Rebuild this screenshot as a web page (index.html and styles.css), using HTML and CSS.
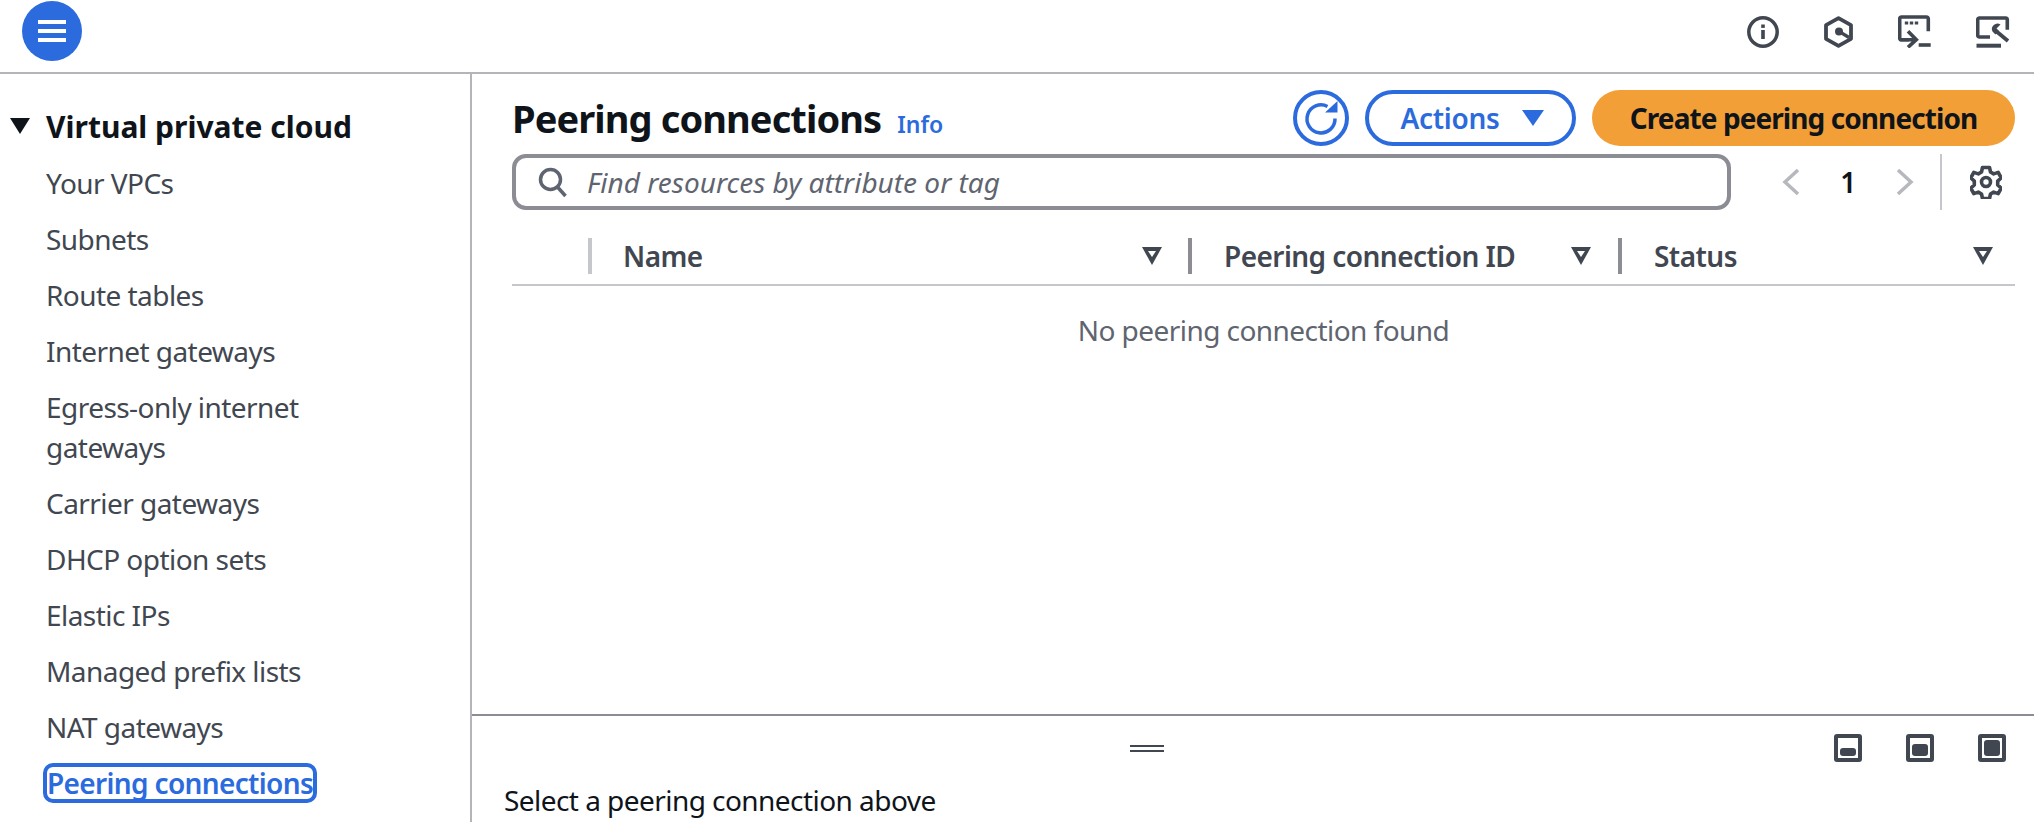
FILE: index.html
```html
<!DOCTYPE html>
<html lang="en">
<head>
<meta charset="utf-8">
<title>Peering connections</title>
<link rel="stylesheet" href="styles.css">
</head>
<body>
<header class="topbar">
  <button class="menu-btn" aria-label="Menu"><span></span><span></span><span></span></button>
  <div class="top-icons">
    <svg class="ti" width="32" height="32" viewBox="0 0 32 32" fill="none" stroke="#414750" stroke-width="3.500"><circle cx="16" cy="16" r="14.200"/><rect x="14.200" y="14" width="3.600" height="9" fill="#414750" stroke="none"/><rect x="14.200" y="8.500" width="3.600" height="3.400" fill="#414750" stroke="none"/></svg>
    <svg class="ti" width="29" height="32" viewBox="0 0 29 32" fill="none" stroke="#414750" stroke-width="3.800"><path d="M14.500 2.200 27 9.200v13.600L14.500 29.800 2 22.800V9.200z" stroke-linejoin="round"/><circle cx="15" cy="15.400" r="4" fill="#414750" stroke="none"/><path d="M15 15.400 25 21.500" stroke-width="3.400"/></svg>
    <svg class="ti" width="33" height="33" viewBox="0 0 33 33" fill="none" stroke="#414750" stroke-width="3.600"><path d="M11 24.700H3.500a1.800 1.800 0 0 1-1.800-1.800V3.800A1.800 1.800 0 0 1 3.500 2h25a1.800 1.800 0 0 1 1.800 1.800v12.500" stroke-linejoin="round"/><path d="M6.800 8h3.400M11.800 8h3.400M16.800 8h3.400" stroke-width="3"/><path d="M1.700 24.700H17M10 16.300l8.300 8.400L10 32.300"/><path d="M20.700 30h12"/></svg>
    <svg class="ti" width="34" height="32" viewBox="0 0 34 32" fill="none" stroke="#414750" stroke-width="3.600"><path d="M14 21H3.500a1.800 1.800 0 0 1-1.800-1.800V3.800A1.800 1.800 0 0 1 3.500 2h26a1.800 1.800 0 0 1 1.800 1.800v10"/><path d="M0.500 29.700h24.500" stroke-width="4"/><path d="M24.500 8.500 20.500 12.500 23 15 19.500 18.500 16.500 15.500a5.500 5.500 0 0 1 8-7z" fill="#414750" stroke="none"/><path d="M20 15l12 10" stroke-width="3.800"/></svg>
  </div>
</header>
<div class="body">
  <nav class="sidebar">
    <div class="nav-head"><span class="caret"></span><span>Virtual private cloud</span></div>
    <ul class="nav-list">
      <li>Your VPCs</li>
      <li>Subnets</li>
      <li>Route tables</li>
      <li>Internet gateways</li>
      <li>Egress-only internet<br>gateways</li>
      <li>Carrier gateways</li>
      <li>DHCP option sets</li>
      <li>Elastic IPs</li>
      <li>Managed prefix lists</li>
      <li>NAT gateways</li>
      <li class="active"><span>Peering connections</span></li>
    </ul>
  </nav>
  <main class="main">
    <section class="upper">
      <div class="title-row">
        <div class="title-left"><h1>Peering connections</h1><a class="info">Info</a></div>
        <div class="actions">
          <button class="refresh" aria-label="Refresh"><svg width="38" height="38" viewBox="0 0 38 38" fill="none" stroke="#2b6bdd" stroke-width="3.500"><path d="M25.500 7.500A14 14 0 1 0 33 19.500"/><path d="M23 13.500h12.500V2z" fill="#2b6bdd" stroke="none"/></svg></button>
          <button class="btn-actions">Actions<span class="tri"></span></button>
          <button class="btn-create">Create peering connection</button>
        </div>
      </div>
      <div class="filter-row">
        <div class="search">
          <svg width="32" height="32" viewBox="0 0 32 32" fill="none" stroke="#5f6570" stroke-width="3.500"><circle cx="13.500" cy="13.500" r="10"/><path d="M20.500 21l8 9"/></svg>
          <span>Find resources by attribute or tag</span>
        </div>
        <div class="pager">
          <svg width="18" height="28" viewBox="0 0 18 28" fill="none" stroke="#b6b8be" stroke-width="3.500"><path d="M16 2 3 14l13 12"/></svg>
          <span class="page">1</span>
          <svg width="18" height="28" viewBox="0 0 18 28" fill="none" stroke="#b6b8be" stroke-width="3.500"><path d="M2 2l13 12L2 26"/></svg>
        </div>
        <div class="gear-wrap">
          <svg width="32" height="34" viewBox="0 0 32 34" fill="none" stroke="#414750" stroke-width="3.600" stroke-linejoin="round"><path d="M12.500 2.500h7l1 4.500 3.200 1.900 4.500-1.500 3 5.500-3.500 3.200v3.800l3.500 3.200-3 5.500-4.500-1.500-3.200 1.900-1 4.500h-7l-1-4.500-3.200-1.900-4.500 1.500-3-5.500 3.500-3.200v-3.800l-3.500-3.200 3-5.500 4.500 1.500 3.200-1.900z"/><circle cx="16" cy="17" r="4.500"/></svg>
        </div>
      </div>
      <div class="thead">
        <div class="th th-check"></div>
        <div class="th th-name"><span>Name</span><i class="sort"></i></div>
        <div class="th th-id"><span>Peering connection ID</span><i class="sort"></i></div>
        <div class="th th-status"><span>Status</span><i class="sort"></i></div>
      </div>
      <p class="empty">No peering connection found</p>
    </section>
    <section class="lower">
      <div class="handle-row">
        <span class="handle"></span>
        <div class="pane-icons">
          <span class="pane p1"><b></b></span>
          <span class="pane p2"><b></b></span>
          <span class="pane p3"><b></b></span>
        </div>
      </div>
      <p class="select">Select a peering connection above</p>
    </section>
  </main>
</div>
</body>
</html>
```

FILE: styles.css
```css
* { box-sizing: border-box; }
html, body { margin: 0; height: 100%; overflow: hidden; background: #fff; }
body { font-family: "Noto Sans", "Open Sans", sans-serif; font-size: 28px; letter-spacing: -0.55px; color: #414750; display: flex; flex-direction: column; height: 822px; }
button { font-family: inherit; cursor: pointer; }
ul { list-style: none; margin: 0; padding: 0; }
p, h1 { margin: 0; }

.topbar { height: 74px; flex: none; border-bottom: 2px solid #b4b4bb; display: flex; justify-content: space-between; padding: 1px 24px 0 22px; }
.menu-btn { width: 60px; height: 60px; border-radius: 50%; border: 0; background: #2b6bdd; display: flex; flex-direction: column; align-items: center; justify-content: center; gap: 5px; padding: 0; }
.menu-btn span { width: 28px; height: 4px; background: #fff; }
.top-icons { display: flex; align-items: center; gap: 45px; height: 60px; padding-top: 1px; }
.ti { display: block; }

.body { flex: 1; display: flex; min-height: 0; }
.sidebar { width: 472px; flex: none; border-right: 2px solid #b4b4bb; padding: 31px 0 0 10px; overflow: hidden; }
.nav-head { display: flex; align-items: center; gap: 16px; font-size: 30px; font-weight: 700; letter-spacing: 0; color: #0f141a; height: 42px; }
.caret { width: 0; height: 0; border-left: 10px solid transparent; border-right: 10px solid transparent; border-top: 16px solid #0f141a; }
.nav-list { padding: 16px 0 0 36px; }
.nav-list li { line-height: 40px; margin-bottom: 16px; }
.nav-list .active { color: #2b6bdd; font-weight: 600; letter-spacing: -0.65px; margin-left: -3px; margin-top: 1px; }
.nav-list .active span { display: inline-block; border: 4px solid #2b6bdd; border-radius: 10px; line-height: 32px; }

.main { flex: 1; display: flex; flex-direction: column; min-width: 0; }
.upper { height: 640px; flex: none; padding: 16px 19px 0 40px; }
.title-row { display: flex; justify-content: space-between; height: 56px; }
.title-left { display: flex; align-items: baseline; gap: 16px; padding-top: 3px; }
h1 { font-size: 38px; font-weight: 700; letter-spacing: -0.9px; color: #0f141a; line-height: 50px; }
.info { color: #2b6bdd; font-size: 23px; font-weight: 600; letter-spacing: 0; }
.actions { display: flex; gap: 16px; }
.refresh { width: 56px; height: 56px; border-radius: 50%; border: 4px solid #2b6bdd; background: #fff; padding: 0; display: flex; align-items: center; justify-content: center; }
.btn-actions { width: 211px; height: 56px; border-radius: 28px; border: 4px solid #2b6bdd; background: #fff; color: #2b6bdd; font-size: 28px; font-weight: 600; letter-spacing: -0.3px; display: flex; align-items: center; justify-content: center; gap: 22px; padding: 0 0 0 3px; }
.tri { width: 0; height: 0; border-left: 11px solid transparent; border-right: 11px solid transparent; border-top: 16px solid #2b6bdd; }
.btn-create { width: 423px; height: 56px; border-radius: 28px; border: 0; background: #f29f38; color: #0f141a; font-size: 28px; font-weight: 700; letter-spacing: -0.92px; padding: 0; }

.filter-row { display: flex; align-items: center; height: 56px; margin-top: 8px; }
.search { width: 1219px; height: 56px; border: 4px solid #8c8c94; border-radius: 14px; display: flex; align-items: center; gap: 18px; padding-left: 21px; color: #5f6570; font-style: italic; letter-spacing: 0; }
.pager { display: flex; align-items: center; margin-left: 51px; gap: 39px; }
.page { font-weight: 600; color: #0f141a; width: 18px; text-align: center; }
.gear-wrap { margin-left: 26px; padding-left: 28px; border-left: 2px solid #c6c6cd; height: 56px; display: flex; align-items: center; }

.thead { display: flex; height: 76px; border-bottom: 2px solid #c6c6cd; padding-top: 28px; font-weight: 600; }
.th { height: 36px; display: flex; align-items: center; justify-content: space-between; }
.th-check { width: 76px; }
.th-name { width: 600px; border-left: 4px solid #c6c6cd; padding: 0 26px 0 31px; }
.th-id { width: 430px; border-left: 4px solid #8c8c94; padding: 0 27px 0 32px; }
.th-status { flex: 1; border-left: 4px solid #8c8c94; padding: 0 22px 0 32px; }
.sort { width: 0; height: 0; position: relative; border-left: 10px solid transparent; border-right: 10px solid transparent; border-top: 18px solid #414750; }
.sort::after { content: ""; position: absolute; left: -4px; top: -14px; border-left: 4px solid transparent; border-right: 4px solid transparent; border-top: 6px solid #fff; }
.empty { text-align: center; line-height: 40px; margin-top: 24px; color: #5f6570; }

.lower { flex: 1; border-top: 2px solid #8c8c94; padding: 0 28px 0 32px; color: #0f141a; }
.handle-row { display: flex; align-items: center; justify-content: space-between; height: 64px; padding-left: 626px; }
.handle { width: 34px; height: 7px; border-top: 2px solid #414750; border-bottom: 2px solid #414750; }
.pane-icons { display: flex; gap: 44px; }
.pane { width: 28px; height: 28px; border: 4px solid #414750; border-radius: 3px; display: flex; align-items: flex-end; padding: 2px; }
.pane b { display: block; width: 100%; background: #414750; border-radius: 3px; }
.p1 b { height: 8px; }
.p2 b { height: 12px; }
.p3 b { height: 16px; }
.select { line-height: 40px; }
```
